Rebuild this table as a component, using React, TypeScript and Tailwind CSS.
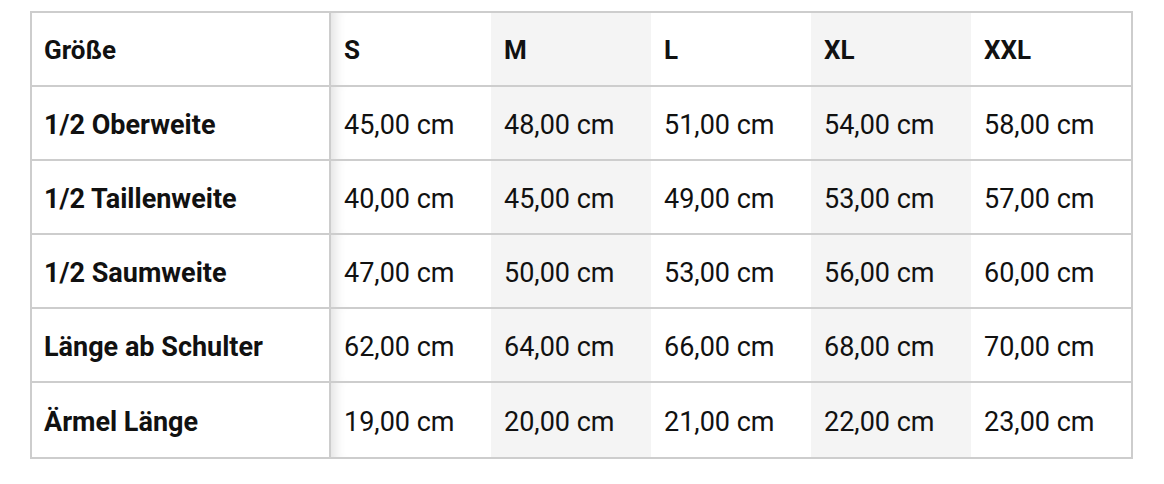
const sizes = ["S", "M", "L", "XL", "XXL"];

const rows = [
  { label: "1/2 Oberweite", values: ["45,00", "48,00", "51,00", "54,00", "58,00"] },
  { label: "1/2 Taillenweite", values: ["40,00", "45,00", "49,00", "53,00", "57,00"] },
  { label: "1/2 Saumweite", values: ["47,00", "50,00", "53,00", "56,00", "60,00"] },
  { label: "Länge ab Schulter", values: ["62,00", "64,00", "66,00", "68,00", "70,00"] },
  { label: "Ärmel Länge", values: ["19,00", "20,00", "21,00", "22,00", "23,00"] },
];

// zebra columns: M and XL are shaded, S carries the sticky-column shadow
const colClass = (i: number) => {
  if (i === 0) return "shadow-[inset_14px_0_12px_-10px_rgba(0,0,0,0.12)]";
  if (i % 2 === 1) return "bg-[#f4f4f4]";
  return "";
};

export default function App() {
  return (
    <div className="bg-white min-h-[484px] pt-[11px] pl-[30px] font-['Roboto',sans-serif] text-[#111]">
      <table className="table-fixed w-[1103px] border-separate border-spacing-0 border-2 border-[#cdcdcd]">
        <colgroup>
          <col className="w-[299px]" />
          {sizes.map((s) => (
            <col key={s} className="w-[160px]" />
          ))}
        </colgroup>
        <thead>
          <tr>
            <th className="h-[74px] pl-3 pt-[3px] text-left align-middle text-[26px] font-bold border-b-2 border-r-2 border-[#cdcdcd]">
              Größe
            </th>
            {sizes.map((s, i) => (
              <th
                key={s}
                className={`h-[74px] pl-[13px] pt-[3px] text-left align-middle text-[26px] font-bold border-b-2 border-[#cdcdcd] ${colClass(i)}`}
              >
                {s}
              </th>
            ))}
          </tr>
        </thead>
        <tbody>
          {rows.map((row, r) => {
            const last = r === rows.length - 1;
            return (
              <tr key={row.label}>
                <td
                  className={`h-[74px] pl-3 pt-[4px] align-middle text-[27px] font-bold border-r-2 border-[#cdcdcd] ${last ? "" : "border-b-2"}`}
                >
                  {row.label}
                </td>
                {row.values.map((v, i) => (
                  <td
                    key={i}
                    className={`h-[74px] pl-[13px] pt-[4px] align-middle text-[27px] whitespace-nowrap border-[#cdcdcd] ${last ? "" : "border-b-2"} ${colClass(i)}`}
                  >
                    {v} cm
                  </td>
                ))}
              </tr>
            );
          })}
        </tbody>
      </table>
    </div>
  );
}
